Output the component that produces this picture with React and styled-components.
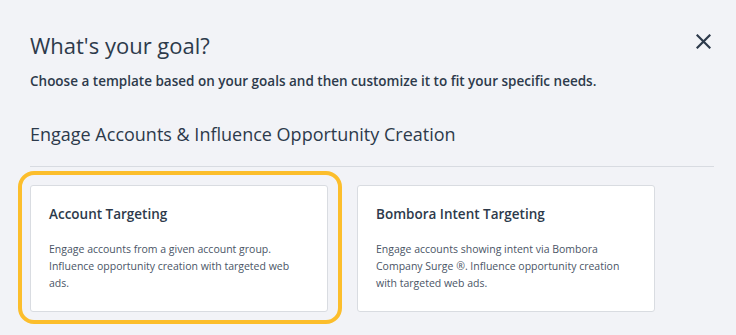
import React from 'react';
import styled, { createGlobalStyle } from 'styled-components';

const GlobalStyle = createGlobalStyle`
  html, body {
    margin: 0;
    padding: 0;
    background: #f2f3f7;
  }
  body {
    font-family: 'Open Sans', 'Noto Sans', sans-serif;
    color: #2d3a4b;
  }
`;

const Modal = styled.div`
  padding: 30px 22px 0 30px;
  box-sizing: border-box;
  width: 736px;
  height: 335px;
  overflow: hidden;
`;

const Header = styled.div`
  display: flex;
  justify-content: space-between;
  align-items: flex-start;
`;

const Title = styled.h1`
  margin: 0;
  font-size: 22px;
  line-height: 30px;
  font-weight: 400;
  color: #2d3a4b;
`;

const CloseButton = styled.button`
  display: flex;
  align-items: center;
  justify-content: center;
  width: 20px;
  height: 20px;
  margin: 1px 0 0 0;
  padding: 0;
  border: none;
  background: transparent;
  color: #2d3a4b;
  cursor: pointer;
  transform: translateX(-1px);
`;

const Subtitle = styled.p`
  margin: 12px 0 0;
  font-size: 13.5px;
  line-height: 18px;
  font-weight: 600;
  color: #2d3a4b;
`;

const Section = styled.h2`
  margin: 32px 0 0;
  padding-bottom: 20px;
  border-bottom: 1px solid #d8dbe1;
  font-size: 18px;
  line-height: 24px;
  font-weight: 400;
  color: #2d3a4b;
`;

const Cards = styled.div`
  display: flex;
  gap: 29px;
  margin-top: 18px;
`;

const Card = styled.div`
  position: relative;
  box-sizing: border-box;
  width: 298px;
  height: 127px;
  padding: 19px 18px;
  background: #ffffff;
  border: 1px solid #d9dce1;
  border-radius: 3px;
  cursor: pointer;

  &::after {
    content: '';
    display: ${({ selected }) => (selected ? 'block' : 'none')};
    position: absolute;
    top: -15px;
    left: -13px;
    right: -15px;
    bottom: -13px;
    border: 4px solid #fcbe2c;
    border-radius: 16px;
    pointer-events: none;
  }
`;

const CardTitle = styled.h3`
  margin: 0;
  font-size: 13.5px;
  line-height: 19px;
  font-weight: 600;
  color: #2d3a4b;
`;

const CardText = styled.p`
  margin: 17px 0 0;
  font-size: 10.5px;
  line-height: 17px;
  font-weight: 400;
  color: #4a5566;
`;

const templates = [
  {
    title: 'Account Targeting',
    text: 'Engage accounts from a given account group. Influence opportunity creation with targeted web ads.',
    selected: true,
  },
  {
    title: 'Bombora Intent Targeting',
    text: 'Engage accounts showing intent via Bombora Company Surge ®. Influence opportunity creation with targeted web ads.',
  },
];

const App = () => (
  <>
    <GlobalStyle />
    <Modal>
      <Header>
        <Title>What's your goal?</Title>
        <CloseButton aria-label="Close">
          <svg width="15" height="15" viewBox="0 0 15 15">
            <path d="M1.5 1.5 L13.5 13.5 M13.5 1.5 L1.5 13.5" stroke="currentColor" strokeWidth="2.2" strokeLinecap="square" />
          </svg>
        </CloseButton>
      </Header>
      <Subtitle>Choose a template based on your goals and then customize it to fit your specific needs.</Subtitle>
      <Section>Engage Accounts &amp; Influence Opportunity Creation</Section>
      <Cards>
        {templates.map(t => (
          <Card key={t.title} selected={t.selected}>
            <CardTitle>{t.title}</CardTitle>
            <CardText>{t.text}</CardText>
          </Card>
        ))}
      </Cards>
    </Modal>
  </>
);

export default App;
